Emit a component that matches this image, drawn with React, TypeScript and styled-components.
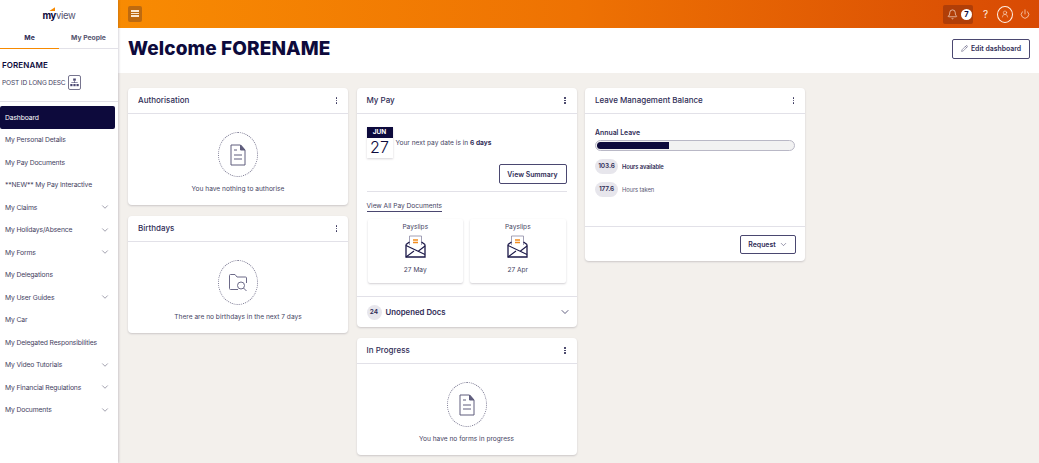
import React from "react";
import styled, { createGlobalStyle } from "styled-components";
import { Bell, ChevronDown, Pencil, Power, UserRound } from "lucide-react";

const navy = "#0d0a3c";
const ink = "#2f2c56";

const GlobalStyle = createGlobalStyle`
    html, body {
        margin: 0;
        padding: 0;
        height: 100%;
        overflow: hidden;
        background: #f3f0ec;
        font-family: "Inter", "Liberation Sans", sans-serif;
        color: ${ink};
    }
    * { box-sizing: border-box; }
`;

const Root = styled.div`
    display: flex;
    width: 1039px;
    height: 463px;
    overflow: hidden;
`;

const Sidebar = styled.aside`
    width: 118px;
    flex: none;
    background: #fff;
    box-shadow: 1px 0 2px rgba(40, 30, 60, 0.18);
    z-index: 1;
`;

const LogoRow = styled.div`
    display: flex;
    justify-content: center;
    height: 30px;
    padding-top: 9px;
`;

const LogoText = styled.div`
    position: relative;
    font-size: 9.5px;
    line-height: 14px;
    letter-spacing: -0.3px;
    font-weight: 700;
    color: ${navy};
    span { font-weight: 400; color: #55536f; }
`;

const LogoMark = styled.i`
    position: absolute;
    top: -2px;
    left: 7px;
    width: 6px;
    height: 4px;
    background: #f78a00;
    clip-path: polygon(0 100%, 100% 0, 100% 100%);
`;

const Tabs = styled.div`
    display: flex;
    height: 19px;
    border-bottom: 1px solid #e2e1e8;
`;

const Tab = styled.div<{ $active?: boolean }>`
    flex: 1;
    height: 19px;
    text-align: center;
    font-size: 6.8px;
    line-height: 16px;
    font-weight: 700;
    color: ${p => (p.$active ? ink : "#56546f")};
    border-bottom: ${p => (p.$active ? "1.5px solid #f78a00" : "none")};
`;

const Profile = styled.div`
    height: 53px;
    padding: 10px 0 0 2px;
    border-bottom: 1px solid #e2e1e8;
`;

const ProfileName = styled.div`
    font-size: 8px;
    line-height: 12px;
    font-weight: 600;
    letter-spacing: 0.1px;
    color: ${navy};
`;

const PostRow = styled.div`
    display: flex;
    align-items: center;
    gap: 2px;
    margin-top: 4px;
    font-size: 6.6px;
    letter-spacing: -0.15px;
    white-space: nowrap;
    color: #45435f;
`;

const OrgButton = styled.span`
    display: flex;
    align-items: center;
    justify-content: center;
    width: 13px;
    height: 15px;
    border: 1px solid #77758f;
    border-radius: 2px;
`;

const Nav = styled.nav`
    padding-top: 4px;
`;

const NavItem = styled.div<{ $active?: boolean }>`
    display: flex;
    align-items: center;
    justify-content: space-between;
    width: 115px;
    height: 22.5px;
    padding: 0 5px;
    font-size: 6.8px;
    letter-spacing: -0.15px;
    white-space: nowrap;
    border-radius: ${p => (p.$active ? "2px" : "0")};
    background: ${p => (p.$active ? navy : "transparent")};
    color: ${p => (p.$active ? "#fff" : "#45435f")};
`;

const Content = styled.div`
    flex: 1;
    min-width: 0;
    display: flex;
    flex-direction: column;
`;

const TopBar = styled.header`
    display: flex;
    align-items: center;
    height: 28px;
    padding: 0 9px 0 10px;
    background: linear-gradient(90deg, #f88b02 0%, #ee7203 50%, #d84a04 100%);
`;

const MenuButton = styled.span`
    display: flex;
    flex-direction: column;
    align-items: center;
    justify-content: center;
    gap: 1px;
    width: 14px;
    height: 16px;
    margin-bottom: 1px;
    border-radius: 2px;
    background: #bd6a10;
    i { width: 8px; height: 1.500px; background: #fbe9d2; }
`;

const TopActions = styled.div`
    display: flex;
    align-items: center;
    margin-left: auto;
    color: #fff1e6;
`;

const BellBox = styled.span`
    display: flex;
    align-items: center;
    gap: 3px;
    width: 30px;
    height: 19px;
    padding-left: 4px;
    border-radius: 2px;
    background: #b03e08;
`;

const BellCount = styled.span`
    width: 11px;
    height: 11px;
    border-radius: 50%;
    background: #fff;
    color: ${navy};
    font-size: 7.5px;
    line-height: 11px;
    font-weight: 700;
    text-align: center;
`;

const Help = styled.span`
    margin-left: 10px;
    font-size: 10px;
`;

const UserRing = styled.span`
    display: flex;
    align-items: center;
    justify-content: center;
    width: 16px;
    height: 17px;
    margin: 0 7px 0 9px;
    border: 1px solid #fff1e6;
    border-radius: 50%;
`;

const TitleBar = styled.div`
    display: flex;
    align-items: center;
    justify-content: space-between;
    height: 45px;
    padding: 0 9px 4px 10px;
    background: #fff;
`;

const Title = styled.h1`
    margin: 0;
    font-size: 19px;
    font-weight: 800;
    letter-spacing: 0.1px;
    color: ${navy};
`;

const OutlineButton = styled.span<{ $w: number; $h: number }>`
    display: flex;
    align-items: center;
    justify-content: center;
    gap: 3px;
    width: ${p => p.$w}px;
    height: ${p => p.$h}px;
    border: 1px solid #4a4770;
    border-radius: 2px;
    background: #fff;
    font-size: 6.9px;
    font-weight: 600;
    color: ${ink};
`;

const Columns = styled.main`
    display: flex;
    align-items: flex-start;
    gap: 8.5px;
    padding: 15px 0 0 10px;
`;

const Column = styled.div`
    display: flex;
    flex-direction: column;
    gap: 11px;
    width: 220px;
`;

const Card = styled.section`
    background: #fff;
    border-radius: 4px;
    box-shadow: 0 1px 2px rgba(50, 40, 60, 0.2);
`;

const CardHead = styled.div`
    display: flex;
    align-items: center;
    justify-content: space-between;
    height: 26px;
    padding: 0 11px 1px 10px;
    border-bottom: 1px solid #e2e1e8;
    font-size: 8px;
    font-weight: 500;
    color: ${ink};
`;

const Kebab = styled.span`
    display: flex;
    flex-direction: column;
    gap: 1.2px;
    margin-top: 1px;
    i { width: 1.4px; height: 1.4px; background: ${ink}; border-radius: 50%; }
`;

const EmptyBody = styled.div`
    display: flex;
    flex-direction: column;
    align-items: center;
    height: 91px;
    padding-top: 18px;
    font-size: 6.6px;
    color: #45435f;
`;

const DashedRing = styled.span`
    display: flex;
    align-items: center;
    justify-content: center;
    width: 40px;
    height: 45px;
    margin-bottom: 8px;
    border: 1px dotted #77758f;
    border-radius: 50%;
`;

const PayBody = styled.div`
    padding: 13px 10px 0;
`;

const PayRow = styled.div`
    display: flex;
    align-items: center;
    gap: 3px;
    font-size: 6.6px;
    color: #45435f;
    b { color: ${ink}; }
`;

const DateTile = styled.div`
    width: 26px;
    height: 31px;
    background: #fff;
    box-shadow: 0 1px 2px rgba(50, 40, 60, 0.2);
    text-align: center;
`;

const DateMonth = styled.div`
    height: 11px;
    background: ${navy};
    color: #fff;
    font-size: 6.5px;
    line-height: 11px;
    font-weight: 700;
`;

const DateDay = styled.div`
    font-size: 16px;
    font-weight: 300;
    line-height: 19px;
    color: ${navy};
`;

const SummaryRow = styled.div`
    display: flex;
    justify-content: flex-end;
    padding: 6px 0 7px;
    border-bottom: 1px solid #e2e1e8;
`;

const DocsLink = styled.span`
    display: inline-block;
    margin-top: 7px;
    font-size: 6.6px;
    line-height: 10px;
    color: #45435f;
    border-bottom: 1px solid #4a4770;
`;

const Slips = styled.div`
    display: flex;
    gap: 7px;
    padding: 7px 1px 0;
`;

const SlipCard = styled.div`
    display: flex;
    flex-direction: column;
    align-items: center;
    width: 96px;
    height: 64px;
    padding-top: 4px;
    border-radius: 2px;
    background: #fff;
    box-shadow: 0 1px 2px rgba(50, 40, 60, 0.22);
    font-size: 6.6px;
    color: #45435f;
    svg { margin: 4px 0 8px; }
`;

const Unopened = styled.div`
    display: flex;
    align-items: center;
    height: 31px;
    margin-top: 13px;
    padding: 0 6px 0 10px;
    border-top: 1px solid #e2e1e8;
    font-size: 7.8px;
    font-weight: 600;
    color: ${ink};
    svg { margin-left: auto; color: ${navy}; }
`;

const CountPill = styled.span<{ $wide?: boolean }>`
    display: inline-block;
    width: ${p => (p.$wide ? "23px" : "15px")};
    height: 15px;
    margin-right: 4px;
    border-radius: 8px;
    background: #e7e6ec;
    font-size: 6.5px;
    font-weight: 600;
    line-height: 15px;
    text-align: center;
    color: ${ink};
`;

const LeaveBody = styled.div`
    height: 112px;
    padding: 14px 10px 0;
`;

const LeaveLabel = styled.div`
    font-size: 6.9px;
    font-weight: 600;
    line-height: 10px;
    color: ${ink};
`;

const Track = styled.div`
    height: 11px;
    margin: 2px 0 8px;
    padding: 1px;
    border: 1px solid #b9b8c6;
    border-radius: 6px;
    background: #f2f2f2;
`;

const Fill = styled.div`
    height: 100%;
    border-radius: 4px 0 0 4px;
    background: ${navy};
`;

const LeaveStat = styled.div<{ $bold?: boolean }>`
    display: flex;
    align-items: center;
    height: 15px;
    margin-bottom: 7.5px;
    font-size: 5.8px;
    letter-spacing: -0.1px;
    font-weight: ${p => (p.$bold ? 600 : 400)};
    color: ${p => (p.$bold ? ink : "#5b5975")};
`;

const LeaveFoot = styled.div`
    display: flex;
    justify-content: flex-end;
    align-items: center;
    height: 35px;
    padding-right: 9px;
    border-top: 1px solid #e2e1e8;
`;

const DocIcon = () => (
    <svg width="16" height="22" viewBox="0 0 16 22" fill="none" stroke="#5f5d7d" strokeWidth="1">
        <path d="M1 1h9.500L15 6v15H1z" />
        <path d="M10.500 1L15 6h-4.500z" fill="#5f5d7d" />
        <path d="M4 6h3M4 11h8M4 15h8" />
    </svg>
);

const FolderSearchIcon = () => (
    <svg width="20" height="20" viewBox="0 0 20 20" fill="none" stroke="#6c6a88" strokeWidth="1">
        <path d="M10 16.500H2.500a1 1 0 0 1-1-1V2.500a1 1 0 0 1 1-1h4.500l2 2.500h8.500a1 1 0 0 1 1 1v5" />
        <circle cx="13" cy="12.500" r="3.500" />
        <path d="M15.500 15l3 3" />
    </svg>
);

const EnvelopeIcon = () => (
    <svg width="21" height="23" viewBox="0 0 21 23" fill="none">
        <path d="M4.500 10V1h12v9" fill="#fff" stroke="#8a88a3" strokeWidth="0.800" />
        <path d="M8 5h5M8 7.500h5" stroke="#f28c1e" strokeWidth="1.400" />
        <path d="M1 9.500l3.500-2.500M20 9.500l-3.500-2.500M1 9.500V22h19V9.500" stroke="#1b1848" strokeWidth="1.300" />
        <path d="M1 10.500l19 9M20 11l-6.500 5M1 22l8-6" stroke="#1b1848" strokeWidth="1.100" />
    </svg>
);

const OrgIcon = () => (
    <svg width="9" height="9" viewBox="0 0 9 9" fill="#4a4770">
        <rect x="3.200" y="0.500" width="2.600" height="2.200" />
        <rect x="4.200" y="2.700" width="0.600" height="2.300" />
        <rect x="1.300" y="4.400" width="6.400" height="0.600" />
        <rect x="0.300" y="6" width="2.200" height="2.200" />
        <rect x="3.400" y="6" width="2.200" height="2.200" />
        <rect x="6.500" y="6" width="2.200" height="2.200" />
    </svg>
);

const More = () => (
    <Kebab><i /><i /><i /></Kebab>
);

const navItems: [string, boolean][] = [
    ["My Personal Details", false],
    ["My Pay Documents", false],
    ["**NEW** My Pay Interactive", false],
    ["My Claims", true],
    ["My Holidays/Absence", true],
    ["My Forms", true],
    ["My Delegations", false],
    ["My User Guides", true],
    ["My Car", false],
    ["My Delegated Responsibilities", false],
    ["My Video Tutorials", true],
    ["My Financial Regulations", true],
    ["My Documents", true],
];

const EmptyCard = ({ title, note, icon }: { title: string; note: string; icon: React.ReactNode }) => (
    <Card>
        <CardHead>{title}<More /></CardHead>
        <EmptyBody>
            <DashedRing>{icon}</DashedRing>
            {note}
        </EmptyBody>
    </Card>
);

const App = () => (
    <Root>
        <GlobalStyle />
        <Sidebar>
            <LogoRow>
                <LogoText><LogoMark />my<span>view</span></LogoText>
            </LogoRow>
            <Tabs>
                <Tab $active>Me</Tab>
                <Tab>My People</Tab>
            </Tabs>
            <Profile>
                <ProfileName>FORENAME</ProfileName>
                <PostRow>POST ID LONG DESC <OrgButton><OrgIcon /></OrgButton></PostRow>
            </Profile>
            <Nav>
                <NavItem $active>Dashboard</NavItem>
                {navItems.map(([label, open]) => (
                    <NavItem key={label}>
                        {label}
                        {open && <ChevronDown size={10} strokeWidth={1.2} />}
                    </NavItem>
                ))}
            </Nav>
        </Sidebar>
        <Content>
            <TopBar>
                <MenuButton><i /><i /><i /></MenuButton>
                <TopActions>
                    <BellBox><Bell size={11} strokeWidth={1.4} /><BellCount>7</BellCount></BellBox>
                    <Help>?</Help>
                    <UserRing><UserRound size={8} strokeWidth={1.5} /></UserRing>
                    <Power size={10} strokeWidth={1.6} />
                </TopActions>
            </TopBar>
            <TitleBar>
                <Title>Welcome FORENAME</Title>
                <OutlineButton $w={78} $h={20}><Pencil size={7} strokeWidth={1.5} />Edit dashboard</OutlineButton>
            </TitleBar>
            <Columns>
                <Column>
                    <EmptyCard title="Authorisation" note="You have nothing to authorise" icon={<DocIcon />} />
                    <EmptyCard title="Birthdays" note="There are no birthdays in the next 7 days" icon={<FolderSearchIcon />} />
                </Column>
                <Column>
                    <Card>
                        <CardHead>My Pay<More /></CardHead>
                        <PayBody>
                            <PayRow>
                                <DateTile>
                                    <DateMonth>JUN</DateMonth>
                                    <DateDay>27</DateDay>
                                </DateTile>
                                <span>Your next pay date is in <b>6 days</b></span>
                            </PayRow>
                            <SummaryRow>
                                <OutlineButton $w={68} $h={20}>View Summary</OutlineButton>
                            </SummaryRow>
                            <DocsLink>View All Pay Documents</DocsLink>
                            <Slips>
                                <SlipCard>Payslips<EnvelopeIcon />27 May</SlipCard>
                                <SlipCard>Payslips<EnvelopeIcon />27 Apr</SlipCard>
                            </Slips>
                        </PayBody>
                        <Unopened>
                            <CountPill>24</CountPill>Unopened Docs
                            <ChevronDown size={12} strokeWidth={1.3} />
                        </Unopened>
                    </Card>
                    <EmptyCard title="In Progress" note="You have no forms in progress" icon={<DocIcon />} />
                </Column>
                <Column>
                    <Card>
                        <CardHead>Leave Management Balance<More /></CardHead>
                        <LeaveBody>
                            <LeaveLabel>Annual Leave</LeaveLabel>
                            <Track><Fill style={{ width: `${(103.6 / 281.2) * 100}%` }} /></Track>
                            <LeaveStat $bold><CountPill $wide>103.6</CountPill>Hours available</LeaveStat>
                            <LeaveStat><CountPill $wide>177.6</CountPill>Hours taken</LeaveStat>
                        </LeaveBody>
                        <LeaveFoot>
                            <OutlineButton $w={56} $h={19}>Request <ChevronDown size={9} strokeWidth={1.3} /></OutlineButton>
                        </LeaveFoot>
                    </Card>
                </Column>
            </Columns>
        </Content>
    </Root>
);

export default App;
